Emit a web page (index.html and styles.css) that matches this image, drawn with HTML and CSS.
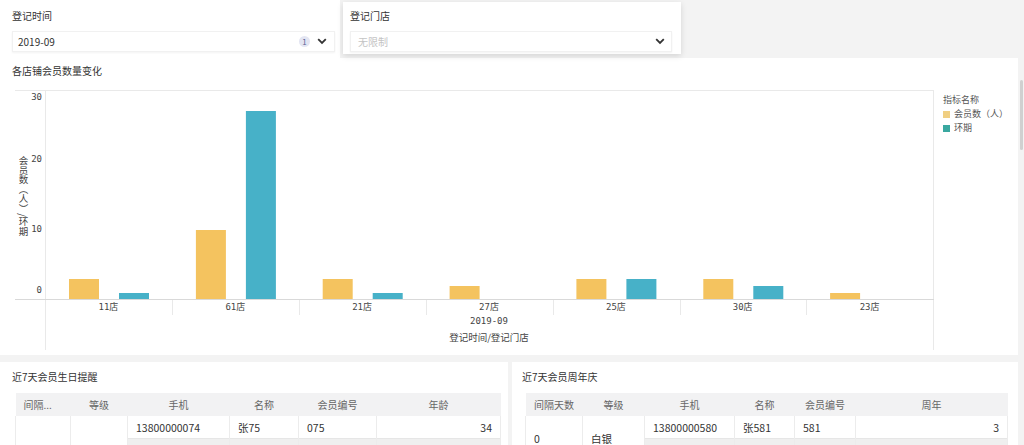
FILE: index.html
```html
<!DOCTYPE html>
<html lang="zh">
<head>
<meta charset="utf-8">
<link rel="stylesheet" href="styles.css">
</head>
<body>
<div class="page">
  <div class="filters">
    <div class="filter f1">
      <div class="flabel">登记时间</div>
      <div class="select s1">
        <span class="val">2019-09</span>
        <span class="badge">1</span>
        <svg class="chev" width="10" height="7" viewBox="0 0 10 7"><polyline points="1.2,1.2 5,5 8.8,1.2" fill="none" stroke="#333" stroke-width="1.8"/></svg>
      </div>
    </div>
    <div class="filter f2">
      <div class="flabel">登记门店</div>
      <div class="select s2">
        <span class="ph">无限制</span>
        <svg class="chev" width="10" height="7" viewBox="0 0 10 7"><polyline points="1.2,1.2 5,5 8.8,1.2" fill="none" stroke="#333" stroke-width="1.8"/></svg>
      </div>
    </div>
  </div>

  <div class="chart-card">
    <div class="ctitle">各店铺会员数量变化</div>
    <div class="chart-row">
      <svg class="chart" width="935" height="277" viewBox="0 0 935 277">
        <g stroke="#e9e9e9" stroke-width="1" fill="none">
          <line x1="15" y1="12.5" x2="934" y2="12.5"/>
          <line x1="45.5" y1="12" x2="45.5" y2="272"/>
          <line x1="933.5" y1="12" x2="933.5" y2="272"/>
          <line x1="172.5" y1="221" x2="172.5" y2="237"/>
          <line x1="299.5" y1="221" x2="299.5" y2="237"/>
          <line x1="426.5" y1="221" x2="426.5" y2="237"/>
          <line x1="553.5" y1="221" x2="553.5" y2="237"/>
          <line x1="680.5" y1="221" x2="680.5" y2="237"/>
          <line x1="806.5" y1="221" x2="806.5" y2="237"/>
        </g>
        <line x1="15" y1="221.5" x2="934" y2="221.5" stroke="#d9d9d9" stroke-width="1"/>
        <g class="ytick" text-anchor="end">
          <text x="42" y="19">30</text>
          <text x="42" y="81">20</text>
          <text x="42" y="151">10</text>
          <text x="42" y="212">0</text>
        </g>
        <text class="ytitle" x="22" y="118" text-anchor="middle">会员数（人）/环期</text>
        <g fill="#f4c35f">
          <rect x="69" y="201" width="30" height="20"/>
          <rect x="195.9" y="152" width="30" height="69"/>
          <rect x="322.7" y="201" width="30" height="20"/>
          <rect x="449.6" y="208" width="30" height="13"/>
          <rect x="576.4" y="201" width="30" height="20"/>
          <rect x="703.3" y="201" width="30" height="20"/>
          <rect x="830.1" y="215" width="30" height="6"/>
        </g>
        <g fill="#47b1c8">
          <rect x="119" y="215" width="30" height="6"/>
          <rect x="245.9" y="33" width="30" height="188"/>
          <rect x="372.7" y="215" width="30" height="6"/>
          <rect x="626.4" y="201" width="30" height="20"/>
          <rect x="753.3" y="208" width="30" height="13"/>
        </g>
        <g class="xlab" text-anchor="middle">
          <text x="108.4" y="229">11店</text>
          <text x="235.3" y="229">61店</text>
          <text x="362.1" y="229">21店</text>
          <text x="489" y="229">27店</text>
          <text x="615.9" y="229">25店</text>
          <text x="742.7" y="229">30店</text>
          <text x="869.6" y="229">23店</text>
          <text x="489" y="243">2019-09</text>
          <text class="xtitle" x="489" y="260">登记时间/登记门店</text>
        </g>
      </svg>
      <div class="legend">
        <div class="lgtitle">指标名称</div>
        <div class="lgitem"><span class="sw sw-y"></span>会员数（人）</div>
        <div class="lgitem"><span class="sw sw-t"></span>环期</div>
      </div>
    </div>
  </div>

  <div class="tables">
    <div class="tcard tleft">
      <div class="ttitle">近7天会员生日提醒</div>
      <table class="grid gl">
        <colgroup><col class="c55"><col class="c57"><col class="c102"><col class="c69"><col class="c78"><col class="c124"></colgroup>
        <thead>
          <tr><th class="first">间隔...</th><th>等级</th><th>手机</th><th>名称</th><th>会员编号</th><th>年龄</th></tr>
        </thead>
        <tbody>
          <tr><td rowspan="2"></td><td rowspan="2"></td><td>13800000074</td><td>张75</td><td>075</td><td class="num">34</td></tr>
          <tr class="alt"><td></td><td></td><td></td><td></td></tr>
        </tbody>
      </table>
    </div>
    <div class="tcard tright">
      <div class="ttitle">近7天会员周年庆</div>
      <table class="grid gr">
        <colgroup><col class="c57"><col class="c62"><col class="c90"><col class="c60"><col class="c61"><col class="c152"></colgroup>
        <thead>
          <tr><th>间隔天数</th><th>等级</th><th>手机</th><th>名称</th><th>会员编号</th><th>周年</th></tr>
        </thead>
        <tbody>
          <tr><td rowspan="2" class="mid">0</td><td rowspan="2" class="mid">白银</td><td>13800000580</td><td>张581</td><td>581</td><td class="num">3</td></tr>
          <tr class="alt"><td></td><td></td><td></td><td></td></tr>
        </tbody>
      </table>
    </div>
  </div>
</div>
<div class="scroll-thumb"></div>
</body>
</html>
```

FILE: styles.css
```css
html, body {
  margin: 0;
  padding: 0;
}
body {
  width: 1024px;
  height: 445px;
  overflow: hidden;
  background: #f3f3f3;
  font-family: "Noto Sans CJK SC", "Noto Sans", sans-serif;
  color: #333;
}
.page {
  width: 1018px;
}
.filters {
  display: flex;
  height: 58px;
}
.filter {
  box-sizing: border-box;
  background: #fff;
}
.f1 {
  width: 340px;
  height: 58px;
  padding: 9px 5px 0 12px;
}
.f2 {
  width: 338px;
  height: 52px;
  margin: 2px 0 0 3px;
  padding: 7px 9px 0 7px;
  box-shadow: 0 2px 6px rgba(0, 0, 0, 0.13);
}
.flabel {
  font-size: 10px;
  line-height: 14px;
  height: 14px;
  color: #333;
}
.select {
  box-sizing: border-box;
  margin-top: 8px;
  height: 21px;
  display: flex;
  align-items: center;
  border: 1px solid #f1f1f1;
  box-shadow: 0 1px 2px rgba(0, 0, 0, 0.05);
  font-size: 10px;
  background: #fff;
}
.s1 {
  padding: 0 7px 0 5px;
}
.s2 {
  padding: 0 6px 0 7px;
}
.val {
  color: #333;
}
.ph {
  color: #c4c4c4;
}
.badge {
  margin-left: auto;
  margin-right: 7px;
  width: 11px;
  height: 11px;
  border-radius: 50%;
  background: #e3e5f2;
  color: #5c6594;
  font-size: 8px;
  line-height: 11px;
  text-align: center;
}
.s2 .chev {
  margin-left: auto;
}
.chev {
  display: block;
}

.chart-card {
  background: #fff;
  height: 297px;
  box-sizing: border-box;
}
.ctitle {
  font-size: 10px;
  line-height: 14px;
  padding: 6px 0 0 12px;
}
.chart-row {
  display: flex;
}
.chart {
  display: block;
  flex: none;
}
.ytick text {
  font-family: "DejaVu Sans Mono", monospace;
  font-size: 9px;
  fill: #444;
  dominant-baseline: middle;
}
.ytitle {
  font-size: 9.5px;
  fill: #444;
  writing-mode: vertical-rl;
  dominant-baseline: middle;
}
.xlab text {
  font-family: "DejaVu Sans Mono", "Noto Sans CJK SC", monospace;
  font-size: 9px;
  fill: #444;
  dominant-baseline: middle;
}
.xlab .xtitle {
  font-family: "Noto Sans CJK SC", sans-serif;
  font-size: 9.5px;
}
.legend {
  margin-left: 8px;
  padding-top: 15px;
  font-size: 9px;
  line-height: 14px;
  color: #555;
}
.lgitem {
  display: flex;
  align-items: center;
}
.sw {
  width: 7px;
  height: 7px;
  margin-right: 4px;
}
.sw-y {
  background: #f0cf82;
}
.sw-t {
  background: #3aa8a0;
}

.tables {
  display: flex;
  gap: 4px;
  margin-top: 7px;
}
.tcard {
  background: #fff;
  height: 83px;
  overflow: hidden;
}
.tleft {
  width: 508px;
}
.tright {
  width: 506px;
}
.ttitle {
  font-size: 10px;
  line-height: 14px;
  padding: 8px 0 0 12px;
}
.tright .ttitle {
  padding-left: 10px;
}
.grid {
  border-collapse: collapse;
  table-layout: fixed;
  margin-top: 9px;
  font-size: 10px;
}
.gl {
  width: 485px;
  margin-left: 15px;
}
.gr {
  width: 482px;
  margin-left: 13px;
}
.c55 { width: 55px; }
.c57 { width: 57px; }
.c102 { width: 102px; }
.c69 { width: 69px; }
.c78 { width: 78px; }
.c124 { width: 124px; }
.c62 { width: 62px; }
.c90 { width: 90px; }
.c60 { width: 60px; }
.c61 { width: 61px; }
.c152 { width: 152px; }
.grid th {
  height: 23px;
  padding: 0;
  background: #f2f2f3;
  color: #666;
  font-weight: normal;
  text-align: center;
  white-space: nowrap;
  overflow: hidden;
}
.grid th.first {
  text-align: left;
  padding-left: 8px;
}
.grid td {
  height: 22px;
  padding: 0 6px 0 8px;
  border-left: 1px solid #ececec;
  border-right: 1px solid #ececec;
  color: #333;
  font-size: 10.5px;
  white-space: nowrap;
  vertical-align: middle;
}
.grid td.num {
  text-align: right;
  padding-right: 8px;
}
.grid tr.alt td {
  background: #efefef;
  border-top: 1px solid #e6e6e6;
}

.scroll-thumb {
  position: fixed;
  right: 1px;
  top: 80px;
  width: 3px;
  height: 70px;
  border-radius: 2px;
  background: #d0d0d0;
}
```
